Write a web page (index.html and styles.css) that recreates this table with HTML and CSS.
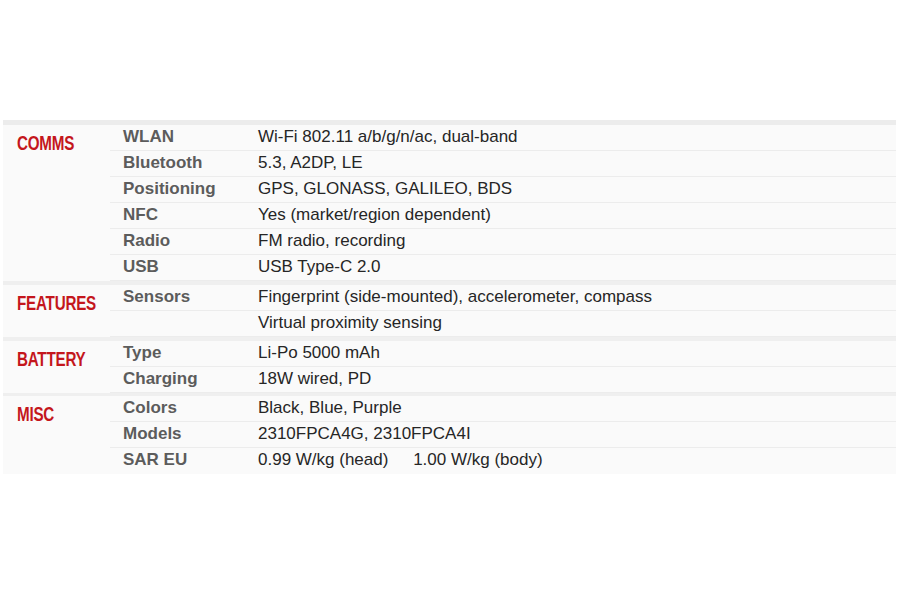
FILE: index.html
```html
<!DOCTYPE html>
<html>
<head>
<meta charset="utf-8">
<link rel="stylesheet" href="styles.css">
</head>
<body>
<div class="page">
  <div class="specs">
    <section class="group">
      <div class="cat"><span class="cat-text">COMMS</span></div>
      <div class="rows">
        <div class="row"><span class="name">WLAN</span><span class="val">Wi-Fi 802.11 a/b/g/n/ac, dual-band</span></div>
        <div class="row"><span class="name">Bluetooth</span><span class="val">5.3, A2DP, LE</span></div>
        <div class="row"><span class="name">Positioning</span><span class="val">GPS, GLONASS, GALILEO, BDS</span></div>
        <div class="row"><span class="name">NFC</span><span class="val">Yes (market/region dependent)</span></div>
        <div class="row"><span class="name">Radio</span><span class="val">FM radio, recording</span></div>
        <div class="row"><span class="name">USB</span><span class="val">USB Type-C 2.0</span></div>
      </div>
    </section>
    <section class="group">
      <div class="cat"><span class="cat-text">FEATURES</span></div>
      <div class="rows">
        <div class="row"><span class="name">Sensors</span><span class="val">Fingerprint (side-mounted), accelerometer, compass</span></div>
        <div class="row"><span class="name"></span><span class="val">Virtual proximity sensing</span></div>
      </div>
    </section>
    <section class="group">
      <div class="cat"><span class="cat-text">BATTERY</span></div>
      <div class="rows">
        <div class="row"><span class="name">Type</span><span class="val">Li-Po 5000 mAh</span></div>
        <div class="row"><span class="name">Charging</span><span class="val">18W wired, PD</span></div>
      </div>
    </section>
    <section class="group">
      <div class="cat"><span class="cat-text">MISC</span></div>
      <div class="rows">
        <div class="row"><span class="name">Colors</span><span class="val">Black, Blue, Purple</span></div>
        <div class="row"><span class="name">Models</span><span class="val">2310FPCA4G, 2310FPCA4I</span></div>
        <div class="row"><span class="name">SAR EU</span><span class="val">0.99 W/kg (head) <span class="gap"></span>1.00 W/kg (body)</span></div>
      </div>
    </section>
  </div>
</div>
</body>
</html>
```

FILE: styles.css
```css
html, body {
  margin: 0;
  padding: 0;
  background: #ffffff;
}
.page {
  padding-top: 120px;
  padding-left: 3px;
}
.specs {
  width: 893px;
  background: #fafafa;
  border-top: 5px solid #ececec;
  font-family: "Liberation Sans", Arial, sans-serif;
}
.group {
  display: flex;
  border-top: 4px solid #efefef;
}
.group:first-child {
  border-top: 0;
}
.group:last-child {
  border-top-width: 3px;
}
.cat {
  width: 107px;
  flex: none;
  box-sizing: border-box;
  padding-left: 14px;
  padding-top: 5px;
  font-family: "Liberation Sans", sans-serif;
  font-weight: bold;
  font-size: 20px;
  line-height: 26px;
  color: #c4161c;
}
.cat-text {
  display: inline-block;
  transform: scaleX(0.76);
  transform-origin: left center;
  letter-spacing: -0.3px;
}
.rows {
  flex: 1;
}
.row {
  display: flex;
  height: 26px;
  box-sizing: border-box;
  border-bottom: 1px solid #ececec;
  line-height: 23px;
}
.group:last-child .row:last-child {
  border-bottom: 0;
}
.name {
  width: 148px;
  flex: none;
  box-sizing: border-box;
  padding-left: 13px;
  font-size: 17px;
  font-weight: bold;
  color: #5c5c5c;
}
.val {
  font-size: 17px;
  color: #262626;
}
.gap {
  display: inline-block;
  width: 20px;
}
```
